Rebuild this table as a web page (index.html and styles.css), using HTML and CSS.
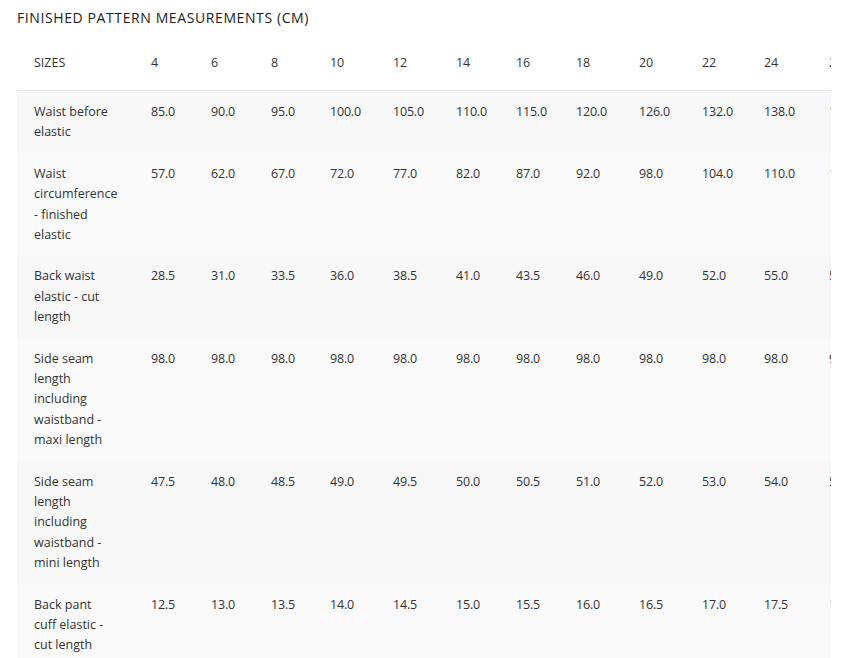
FILE: index.html
```html
<!DOCTYPE html>
<html lang="en">
<head>
<meta charset="utf-8">
<title>Finished pattern measurements</title>
<link rel="stylesheet" href="styles.css">
</head>
<body>
<h2 class="title">Finished pattern measurements (cm)</h2>
<div class="table-wrap">
<table class="size-table">
<colgroup>
<col class="c-label"><col class="c60"><col class="c60"><col class="c59"><col class="c63"><col class="c63"><col class="c60"><col class="c60"><col class="c63"><col class="c63"><col class="c62"><col class="c65"><col class="c65">
</colgroup>
<thead>
<tr><th class="label">SIZES</th><th>4</th><th>6</th><th>8</th><th>10</th><th>12</th><th>14</th><th>16</th><th>18</th><th>20</th><th>22</th><th>24</th><th>26</th></tr>
</thead>
<tbody>
<tr><td class="label">Waist before elastic</td><td>85.0</td><td>90.0</td><td>95.0</td><td>100.0</td><td>105.0</td><td>110.0</td><td>115.0</td><td>120.0</td><td>126.0</td><td>132.0</td><td>138.0</td><td>144.0</td></tr>
<tr><td class="label">Waist circumference - finished elastic</td><td>57.0</td><td>62.0</td><td>67.0</td><td>72.0</td><td>77.0</td><td>82.0</td><td>87.0</td><td>92.0</td><td>98.0</td><td>104.0</td><td>110.0</td><td>116.0</td></tr>
<tr><td class="label">Back waist elastic - cut length</td><td>28.5</td><td>31.0</td><td>33.5</td><td>36.0</td><td>38.5</td><td>41.0</td><td>43.5</td><td>46.0</td><td>49.0</td><td>52.0</td><td>55.0</td><td>58.0</td></tr>
<tr><td class="label">Side seam length including waistband - maxi length</td><td>98.0</td><td>98.0</td><td>98.0</td><td>98.0</td><td>98.0</td><td>98.0</td><td>98.0</td><td>98.0</td><td>98.0</td><td>98.0</td><td>98.0</td><td>98.0</td></tr>
<tr><td class="label">Side seam length including waistband - mini length</td><td>47.5</td><td>48.0</td><td>48.5</td><td>49.0</td><td>49.5</td><td>50.0</td><td>50.5</td><td>51.0</td><td>52.0</td><td>53.0</td><td>54.0</td><td>55.0</td></tr>
<tr><td class="label">Back pant cuff elastic - cut length</td><td>12.5</td><td>13.0</td><td>13.5</td><td>14.0</td><td>14.5</td><td>15.0</td><td>15.5</td><td>16.0</td><td>16.5</td><td>17.0</td><td>17.5</td><td>18.0</td></tr>
</tbody>
</table>
</div>
</body>
</html>
```
FILE: styles.css
```css
html, body {
  margin: 0;
  padding: 0;
  background: #ffffff;
}
body {
  padding: 0 17px;
  font-family: "Open Sans", "Liberation Sans", sans-serif;
  color: #333333;
}
.title {
  margin: 9px 0 0 0;
  font-size: 14px;
  font-weight: 400;
  line-height: 18px;
  letter-spacing: 0.6px;
  text-transform: uppercase;
  color: #222222;
}
.table-wrap {
  width: 814px;
  overflow: hidden;
  margin-top: 9px;
}
.size-table {
  border-collapse: collapse;
  table-layout: fixed;
  width: 860px;
  font-size: 12.5px;
  line-height: 20.4px;
  white-space: nowrap;
  letter-spacing: -0.2px;
}
.c-label { width: 117px; }
.c59 { width: 59px; }
.c60 { width: 60px; }
.c62 { width: 62px; }
.c63 { width: 63px; }
.c65 { width: 65px; }
.size-table th,
.size-table td {
  text-align: left;
  vertical-align: top;
  font-weight: 400;
  padding: 10.5px 0 10.5px 17px;
  overflow: visible;
}
.size-table th {
  padding-top: 17px;
  padding-bottom: 17px;
}
.size-table thead tr {
  border-bottom: 1px solid #e6e6e6;
}
.size-table .label {
  white-space: normal;
  letter-spacing: 0;
  padding-right: 20px;
}
.size-table tbody tr:nth-child(odd) {
  background: #f8f8f8;
}
.size-table tbody tr:nth-child(even) {
  background: #fafafa;
}
```
